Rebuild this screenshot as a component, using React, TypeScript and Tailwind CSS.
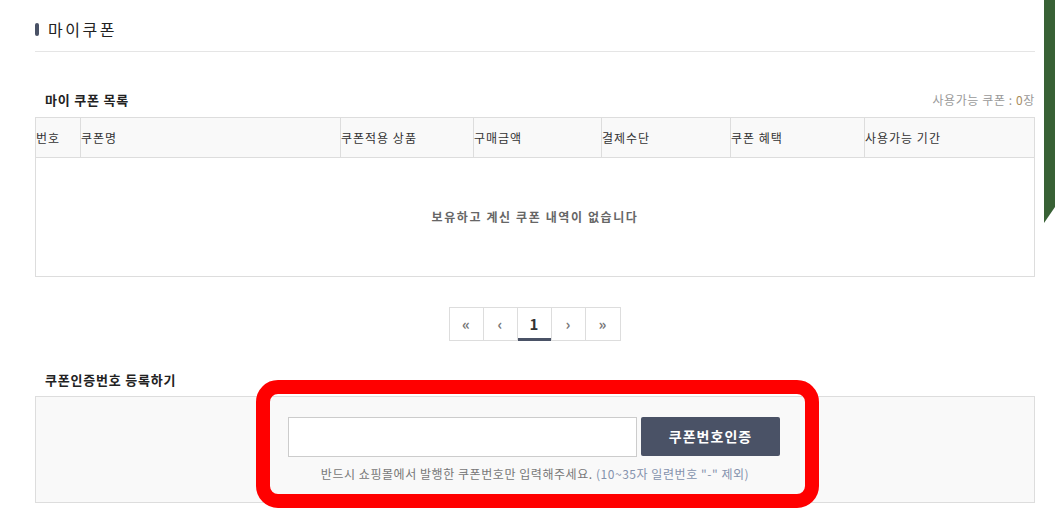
import React from 'react'

const columns = [
  { label: '번호', w: 'w-[45px]' },
  { label: '쿠폰명', w: 'w-[260px]' },
  { label: '쿠폰적용 상품', w: 'w-[133px]' },
  { label: '구매금액', w: 'w-[128px]' },
  { label: '결제수단', w: 'w-[129px]' },
  { label: '쿠폰 혜택', w: 'w-[134px]' },
  { label: '사용가능 기간', w: 'flex-1' },
]

export default function App() {
  return (
    <div className="relative w-[1055px] h-[508px] overflow-hidden bg-white font-['Noto_Sans_CJK_KR',sans-serif] text-[#333]">
      {/* green side bar */}
      <svg className="absolute right-0 top-0" width="11" height="224" viewBox="0 0 11 224">
        <polygon points="0,0 11,0 11,207 0,223" fill="#386135" />
      </svg>

      <div className="ml-[35px] w-[1000px]">
        {/* heading */}
        <div className="flex items-end h-[52px] border-b border-[#e5e5e5] pb-[14px]">
          <span className="w-[4px] h-[13px] rounded-full bg-[#4a5266] mr-[9px] mb-[1px]" />
          <h2 className="text-[16px] leading-none tracking-[2.5px] text-[#222]">마이쿠폰</h2>
        </div>

        {/* list header */}
        <div className="flex items-end justify-between h-[65px] pb-[11px] pl-[10px]">
          <h3 className="text-[13px] font-bold leading-none tracking-[0.8px] text-[#222]">마이 쿠폰 목록</h3>
          <p className="text-[12px] leading-none tracking-[0.6px] text-[#999]">
            사용가능 쿠폰 : <span className="text-[#a88c5c]">0</span>장
          </p>
        </div>

        {/* table */}
        <div className="border border-[#ddd]">
          <div className="flex h-[40px] bg-[#f9f9f9] border-b border-[#ddd]">
            {columns.map((c, i) => (
              <div
                key={c.label}
                className={`${c.w} flex items-center text-[12px] tracking-[1px] text-[#333] ${i < columns.length - 1 ? 'border-r border-[#ddd]' : ''}`}
              >
                {c.label}
              </div>
            ))}
          </div>
          <div className="h-[118px] flex items-center justify-center text-[12px] font-bold tracking-[1.6px] text-[#666]">
            보유하고 계신 쿠폰 내역이 없습니다
          </div>
        </div>

        {/* pagination */}
        <div className="flex justify-center mt-[30px] pr-[1px]">
          <div className="flex border border-[#ddd]">
            {['«', '‹', '1', '›', '»'].map((p, i) => (
              <div
                key={i}
                className={`relative w-[34px] h-[32px] flex items-center justify-center text-[15px] font-bold ${i < 4 ? 'border-r border-[#ddd]' : ''} ${p === '1' ? 'text-[#333] text-[13px]' : 'text-[#777]'}`}
              >
                {p}
                {p === '1' && <span className="absolute left-0 right-0 bottom-[-1px] h-[3px] bg-[#4a5266]" />}
              </div>
            ))}
          </div>
        </div>

        {/* register */}
        <h3 className="mt-[32px] pl-[10px] text-[13px] font-bold leading-none tracking-[0.8px] text-[#222]">쿠폰인증번호 등록하기</h3>
        <div className="mt-[10px] h-[107px] border border-[#ddd] bg-[#f9f9f9] flex flex-col items-center pt-[20px]">
          <div className="flex gap-[4px] mr-[2px]">
            <input className="w-[349px] h-[40px] bg-white border border-[#ccc] outline-none" />
            <button className="w-[139px] h-[39px] rounded-[2px] bg-[#4a5266] text-white text-[14px] font-bold tracking-[1px]">
              쿠폰번호인증
            </button>
          </div>
          <p className="mt-[8px] text-[12px] tracking-[0.55px] text-[#777]">
            반드시 쇼핑몰에서 발행한 쿠폰번호만 입력해주세요.{' '}
            <span className="text-[#8492ad]">(10~35자 일련번호 "-" 제외)</span>
          </p>
        </div>
      </div>

      {/* red highlight */}
      <div className="absolute left-[256px] top-[380px] w-[563px] h-[128px] border-[14px] border-[#ff0000] rounded-[22px]" />
    </div>
  )
}
